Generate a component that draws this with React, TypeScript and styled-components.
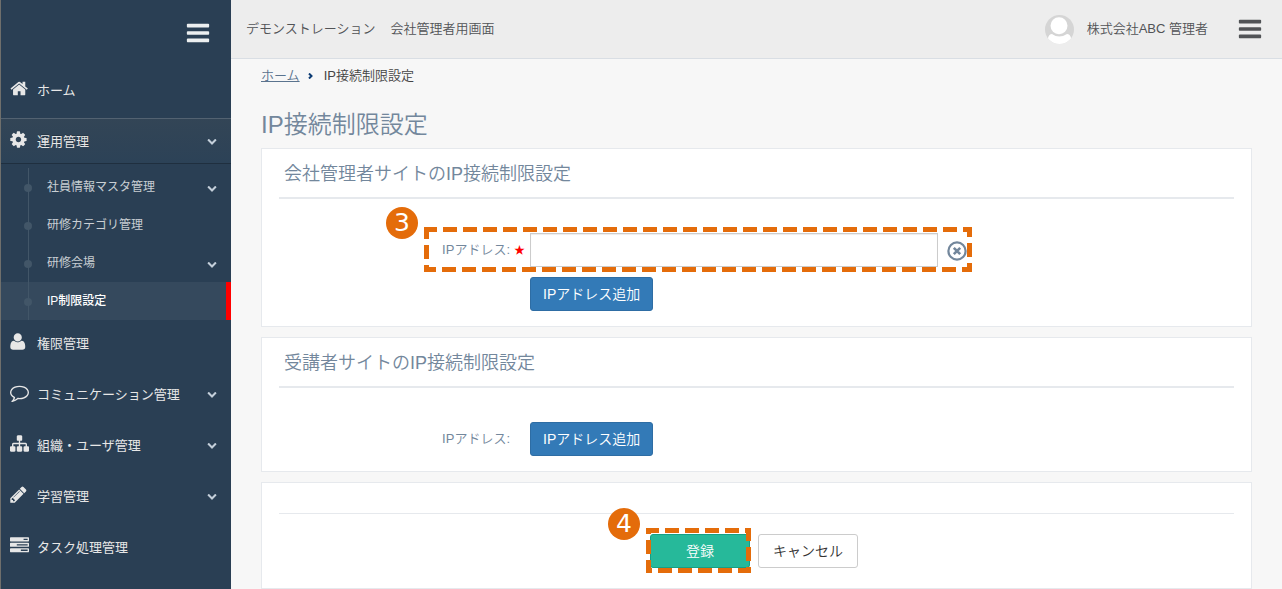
import React from "react";
import styled, { createGlobalStyle, css } from "styled-components";

const GlobalStyle = createGlobalStyle`
  *, *::before, *::after { box-sizing: border-box; }
  body {
    margin: 0;
    background: #f7f7f7;
    color: #73879c;
    font-family: "Liberation Sans", "Noto Sans CJK JP", sans-serif;
    font-size: 13px;
    font-weight: 350;
    line-height: 20px;
  }
  button, input { font-family: inherit; font-weight: inherit; }
  h1, h2, ul, ol { margin: 0; padding: 0; font-weight: 350; list-style: none; }
`;

const Page = styled.div`
  display: flex;
  min-height: 100vh;
`;

const Sidebar = styled.aside`
  flex: 0 0 231px;
  background: #2a3f54;
  border-left: 1px solid #6f6f6c;
`;

const SidebarTop = styled.div`
  display: flex;
  justify-content: flex-end;
  padding: 20px 20px 21px;
`;

const IconButton = styled.button<{ $color: string }>`
  display: flex;
  padding: 0;
  border: 0;
  background: none;
  color: ${(p) => p.$color};
  cursor: pointer;
`;

const MenuLink = styled.a<{ $active?: boolean }>`
  display: flex;
  align-items: center;
  height: 45px;
  margin-bottom: 6px;
  padding: 2px 14px 0 9px;
  color: #e7e7e7;
  font-weight: 400;
  text-decoration: none;
  ${(p) =>
    p.$active &&
    css`
      margin-bottom: 5px;
      background: linear-gradient(#334556, #2c4257);
      box-shadow: rgba(0, 0, 0, 0.25) 0 1px 0, inset rgba(255, 255, 255, 0.16) 0 1px 0;
      text-shadow: rgba(0, 0, 0, 0.25) 0 -1px 0;
    `}
`;

const MenuIcon = styled.span`
  display: flex;
  width: 27px;
  padding-bottom: 5px;
`;

const Grow = styled.span`
  flex: 1;
`;

const Arrow = styled.span<{ $nested?: boolean }>`
  display: flex;
  padding: ${(p) => (p.$nested ? "2px 0 0" : "0 0 2px")};
  color: #c4cfda;
`;

const SubMenu = styled.ul`
  position: relative;
  &::before {
    content: "";
    position: absolute;
    top: 0;
    bottom: 0;
    left: 27px;
    width: 1px;
    background: #425668;
  }
`;

const SubLink = styled.a<{ $active?: boolean }>`
  display: flex;
  align-items: center;
  gap: 15px;
  height: 38px;
  padding: 0 14px 0 23px;
  font-size: 12px;
  font-weight: ${(p) => (p.$active ? 500 : 400)};
  text-decoration: none;
  color: ${(p) => (p.$active ? "#fff" : "rgba(255, 255, 255, 0.75)")};
  ${(p) =>
    p.$active &&
    css`
      background: #35495d;
      border-right: 5px solid #f00;
    `}
`;

const Dot = styled.span`
  width: 8px;
  height: 8px;
  margin-top: 2px;
  border-radius: 50%;
  background: #425668;
`;

const Main = styled.div`
  flex: 1;
  min-width: 0;
`;

const TopBar = styled.header`
  display: flex;
  align-items: center;
  height: 59px;
  padding: 0 19px 0 15px;
  background: #ededed;
  border-bottom: 1px solid #d9dee4;
  color: #515356;
`;

const SiteName = styled.span`
  margin-right: 15px;
`;

const UserName = styled.span`
  margin: 0 29px 0 13px;
`;

const Content = styled.main`
  padding: 7px 30px 0;
`;

const Breadcrumb = styled.ol`
  display: flex;
  align-items: center;
  color: #444;
  a { color: #5a738e; text-underline-offset: 1px; }
  svg { margin: 0 11px 0 8px; }
`;

const PageTitle = styled.h1`
  margin: 21px 0 5px;
  font-size: 24px;
  line-height: 36px;
`;

const Panel = styled.section`
  margin-bottom: 10px;
  padding: 0 17px 15px;
  background: #fff;
  border: 1px solid #e6e9ed;
`;

const PanelTitle = styled.h2`
  margin-bottom: 34px;
  padding: 11px 5px 9px;
  border-bottom: 2px solid #e6e9ed;
  font-size: 18px;
  line-height: 28px;
`;

const FormGrid = styled.div`
  display: grid;
  grid-template-columns: 251fr 408fr 296fr;
  row-gap: 10px;
  position: relative;
`;

const FieldLabel = styled.label<{ $required?: boolean }>`
  display: flex;
  align-items: center;
  justify-content: flex-end;
  gap: 4px;
  padding-right: ${(p) => (p.$required ? 5 : 20)}px;
`;

const Star = styled.span`
  width: 11px;
  color: #f00;
  font-size: 11px;
`;

const TextInput = styled.input`
  width: 100%;
  height: 34px;
  padding: 6px 12px;
  border: 1px solid #ccc;
  box-shadow: inset 0 1px 1px rgba(0, 0, 0, 0.075);
  background: #fff;
  color: #555;
  font-size: 14px;
`;

const RemoveCell = styled.div`
  display: flex;
  align-items: center;
  padding: 1px 0 0 9px;
`;

const ButtonCell = styled.div`
  grid-column: 2;
  display: flex;
`;

type Tone = "primary" | "success" | "plain";

const tones = {
  primary: css`background: #337ab7; border-color: #2e6da4; color: #fff;`,
  success: css`background: #26b99a; border-color: #169f85; color: #fff;`,
  plain: css`background: #fff; border-color: #ccc; color: #333;`,
};

const Button = styled.button<{ $tone: Tone; $wide?: boolean }>`
  height: 34px;
  width: ${(p) => (p.$wide ? "100px" : "auto")};
  padding: 0 12px 2px;
  border: 1px solid;
  border-radius: 3px;
  font-size: 14px;
  cursor: pointer;
  ${(p) => tones[p.$tone]}
`;

const ActionPanel = styled(Panel)`
  margin-bottom: 0;
  padding: 30px 17px 20px;
`;

const Actions = styled.div`
  display: flex;
  justify-content: center;
  gap: 8px;
  padding: 20px 5px 0 0;
  border-top: 1px solid #e6e9ed;
`;

const Marked = styled.div`
  position: relative;
  display: flex;
`;

const FieldMark = styled.div`
  position: absolute;
  top: -6px;
  right: calc(100% * 296 / 955 - 34px);
  left: calc(100% * 251 / 955 - 106px);
  height: 45px;
  pointer-events: none;
`;

const ButtonMark = styled.div`
  position: absolute;
  inset: -6px -1px -5px -4px;
  pointer-events: none;
`;

const Badge = styled.span`
  position: absolute;
  top: -20px;
  left: -38px;
  width: 32px;
  height: 32px;
  border-radius: 50%;
  background: #e46c0a;
  color: #fff;
  font: 400 25px/32px "DejaVu Sans", sans-serif;
  text-align: center;
`;

const FrameSvg = styled.svg`
  display: block;
  width: 100%;
  height: 100%;
  overflow: visible;
`;

const FrameRect = styled.rect`
  width: calc(100% - 5px);
  height: calc(100% - 5px);
`;

const DashedFrame = ({ step }: { step: number }) => (
  <>
    <FrameSvg aria-hidden="true">
      <FrameRect x="2.5" y="2.5" fill="none" stroke="#e46c0a" strokeWidth="5" strokeDasharray="14 6" strokeDashoffset="3.5" />
      <rect width="5" height="5" fill="#e46c0a" />
    </FrameSvg>
    <Badge>{step}</Badge>
  </>
);

const paths = {
  home: "M1472 992v480q0 26-19 45t-45 19h-384v-384h-256v384h-384q-26 0-45-19t-19-45v-480q0-1 .5-3t.5-3l575-474 575 474q1 2 1 6zm223-69l-62 74q-8 9-21 11h-3q-13 0-21-7l-692-577-692 577q-12 8-24 7-13-2-21-11l-62-74q-8-10-7-23.5t11-21.5l719-599q32-26 76-26t76 26l244 204v-195q0-14 9-23t23-9h192q14 0 23 9t9 23v408l219 182q10 8 11 21.5t-7 23.5z",
  cog: "M1152 896q0-106-75-181t-181-75-181 75-75 181 75 181 181 75 181-75 75-181zm512-109v222q0 12-8 23t-20 13l-185 28q-19 54-39 91 35 50 107 138 10 12 10 25t-9 23q-27 37-99 108t-94 71q-12 0-26-9l-138-108q-44 23-91 38-16 136-29 186-7 28-36 28h-222q-14 0-24.5-8.5t-11.5-21.5l-28-184q-49-16-90-37l-141 107q-10 9-25 9-14 0-25-11-126-114-165-168-7-10-7-23 0-12 8-23 15-21 51-66.5t54-70.5q-27-50-41-99l-183-27q-13-2-21-12.5t-8-23.5v-222q0-12 8-23t19-13l186-28q14-46 39-92-40-57-107-138-10-12-10-24 0-10 9-23 26-36 98.5-107.500t94.500-71.500q13 0 26 10l138 107q44-23 91-38 16-136 29-186 7-28 36-28h222q14 0 24.500 8.500t11.500 21.500l28 184q49 16 90 37l142-107q9-9 24-9 13 0 25 10 129 119 165 170 7 8 7 22 0 12-8 23-15 21-51 66.500t-54 70.500q26 50 41 98l183 28q13 2 21 12.500t8 23.500z",
  user: "M1600 1405q0 120-73 189.5t-194 69.5h-874q-121 0-194-69.5t-73-189.5q0-53 3.5-103.5t14-109 26.5-108.5 43-97.5 62-81 85.5-53.5 111.5-20q9 0 42 21.5t74.5 48 108 48 133.5 21.5 133.5-21.5 108-48 74.5-48 42-21.5q61 0 111.5 20t85.5 53.5 62 81 43 97.5 26.5 108.5 14 109 3.5 103.5zm-320-893q0 159-112.5 271.5t-271.5 112.5-271.5-112.5-112.5-271.5 112.5-271.5 271.5-112.5 271.5 112.5 112.5 271.5z",
  comment: "M896 384q-204 0-381.500 69.500t-282 187.500-104.500 255q0 112 71.500 213.500t201.500 175.500l87 50-27 96q-24 91-70 172 152-63 275-171l43-38 57 6q69 8 130 8 204 0 381.500-69.500t282-187.500 104.500-255-104.500-255-282-187.500-381.500-69.500zm896 512q0 174-120 321.500t-326 233-450 85.500q-70 0-145-8-198 175-460 242-49 14-114 22h-5q-15 0-27-10.500t-16-27.500v-1q-3-4-.5-12t2-10 4.500-9.500l6-9 7-8.500 8-9q7-8 31-34.500t34.500-38 31-39.500 32.500-51 27-59 26-76q-157-89-247.500-220t-90.500-281q0-174 120-321.500t326-233 450-85.500 450 85.500 326 233 120 321.500z",
  sitemap: "M1792 1248v320q0 40-28 68t-68 28h-320q-40 0-68-28t-28-68v-320q0-40 28-68t68-28h96v-192h-512v192h96q40 0 68 28t28 68v320q0 40-28 68t-68 28h-320q-40 0-68-28t-28-68v-320q0-40 28-68t68-28h96v-192h-512v192h96q40 0 68 28t28 68v320q0 40-28 68t-68 28h-320q-40 0-68-28t-28-68v-320q0-40 28-68t68-28h96v-192q0-52 38-90t90-38h512v-192h-96q-40 0-68-28t-28-68v-320q0-40 28-68t68-28h320q40 0 68 28t28 68v320q0 40-28 68t-68 28h-96v192h512q52 0 90 38t38 90v192h96q40 0 68 28t28 68z",
  pencil: "M491 1536l91-91-235-235-91 91v107h128v128h107zm523-928q0-22-22-22-10 0-17 7l-542 542q-7 7-7 17 0 22 22 22 10 0 17-7l542-542q7-7 7-17zm-54-192l416 416-832 832h-416v-416zm683 96q0 53-37 90l-166 166-416-416 166-165q36-38 90-38 53 0 91 38l235 234q37 39 37 91z",
  tasks: "M1024 1408h640v-128h-640v128zm-384-512h1024v-128h-1024v128zm640-512h384v-128h-384v128zm512 832v256q0 26-19 45t-45 19h-1664q-26 0-45-19t-19-45v-256q0-26 19-45t45-19h1664q26 0 45 19t19 45zm0-512v256q0 26-19 45t-45 19h-1664q-26 0-45-19t-19-45v-256q0-26 19-45t45-19h1664q26 0 45 19t19 45zm0-512v256q0 26-19 45t-45 19h-1664q-26 0-45-19t-19-45v-256q0-26 19-45t45-19h1664q26 0 45 19t19 45z",
  chevron: "M1683 808l-742 741q-19 19-45 19t-45-19l-742-741q-19-19-19-45.500t19-45.500l166-165q19-19 45-19t45 19l531 531 531-531q19-19 45-19t45 19l166 165q19 19 19 45.500t-19 45.500z",
  bars: "M1664 1344v128q0 26-19 45t-45 19h-1408q-26 0-45-19t-19-45v-128q0-26 19-45t45-19h1408q26 0 45 19t19 45zm0-512v128q0 26-19 45t-45 19h-1408q-26 0-45-19t-19-45v-128q0-26 19-45t45-19h1408q26 0 45 19t19 45zm0-512v128q0 26-19 45t-45 19h-1408q-26 0-45-19t-19-45v-128q0-26 19-45t45-19h1408q26 0 45 19t19 45z",
};

type IconName = keyof typeof paths;

// Left bearing of each glyph, so that menu icons share one left edge.
const bearings: Partial<Record<IconName, number>> = { home: 32, cog: 100, user: 164, pencil: 100 };

const Icon = ({ name, size }: { name: IconName; size: number }) => (
  <svg
    width={size}
    height={size}
    viewBox={`${bearings[name] ?? 0} 0 1792 1792`}
    fill="currentColor"
    aria-hidden="true"
  >
    <path d={paths[name]} />
  </svg>
);

const Avatar = () => (
  <svg width="29" height="29" viewBox="0 0 29 29" aria-hidden="true">
    <clipPath id="avatar-clip"><circle cx="14.5" cy="14.5" r="14.5" /></clipPath>
    <g clipPath="url(#avatar-clip)">
      <rect width="29" height="29" fill="#d5d5d5" />
      <path d="M3 29V23q1-4 4-4 7 5 15 0 3 0 4 4v6z" fill="#fff" />
      <circle cx="14" cy="10.8" r="10" fill="#d5d5d5" />
      <circle cx="14" cy="10.8" r="8.5" fill="#fff" />
    </g>
  </svg>
);

interface SubItem { label: string; arrow?: boolean; active?: boolean }
interface Item { label: string; icon: IconName; arrow?: boolean; active?: boolean; children?: SubItem[] }

const menu: Item[] = [
  { label: "ホーム", icon: "home" },
  {
    label: "運用管理",
    icon: "cog",
    arrow: true,
    active: true,
    children: [
      { label: "社員情報マスタ管理", arrow: true },
      { label: "研修カテゴリ管理" },
      { label: "研修会場", arrow: true },
      { label: "IP制限設定", active: true },
    ],
  },
  { label: "権限管理", icon: "user" },
  { label: "コミュニケーション管理", icon: "comment", arrow: true },
  { label: "組織・ユーザ管理", icon: "sitemap", arrow: true },
  { label: "学習管理", icon: "pencil", arrow: true },
  { label: "タスク処理管理", icon: "tasks" },
];

export default function App() {
  return (
    <Page lang="ja">
      <GlobalStyle />
      <Sidebar>
        <SidebarTop>
          <IconButton type="button" $color="#eceff0" aria-label="メニュー切替">
            <Icon name="bars" size={26} />
          </IconButton>
        </SidebarTop>
        <nav>
          <ul>
            {menu.map((item) => (
              <li key={item.label}>
                <MenuLink href="#" $active={item.active}>
                  <MenuIcon><Icon name={item.icon} size={19} /></MenuIcon>
                  <span>{item.label}</span>
                  <Grow />
                  {item.arrow && <Arrow><Icon name="chevron" size={10} /></Arrow>}
                </MenuLink>
                {item.children && (
                  <SubMenu>
                    {item.children.map((sub) => (
                      <li key={sub.label}>
                        <SubLink href="#" $active={sub.active}>
                          <Dot />
                          <span>{sub.label}</span>
                          <Grow />
                          {sub.arrow && <Arrow $nested><Icon name="chevron" size={10} /></Arrow>}
                        </SubLink>
                      </li>
                    ))}
                  </SubMenu>
                )}
              </li>
            ))}
          </ul>
        </nav>
      </Sidebar>
      <Main>
        <TopBar>
          <SiteName>デモンストレーション</SiteName>
          <span>会社管理者用画面</span>
          <Grow />
          <Avatar />
          <UserName>株式会社ABC 管理者</UserName>
          <IconButton type="button" $color="#515356" aria-label="ユーザーメニュー">
            <Icon name="bars" size={26} />
          </IconButton>
        </TopBar>
        <Content>
          <Breadcrumb>
            <li><a href="#">ホーム</a></li>
            <svg width="5" height="6" viewBox="0 0 5 6" aria-hidden="true">
              <path d="M1 0.5L3.5 3 1 5.5" fill="none" stroke="#0b3a73" strokeWidth="2" />
            </svg>
            <li>IP接続制限設定</li>
          </Breadcrumb>
          <PageTitle>IP接続制限設定</PageTitle>
          <Panel>
            <PanelTitle>会社管理者サイトのIP接続制限設定</PanelTitle>
            <FormGrid>
              <FieldLabel htmlFor="admin-ip" $required>
                IPアドレス: <Star>★</Star>
              </FieldLabel>
              <TextInput id="admin-ip" type="text" />
              <RemoveCell>
                <IconButton type="button" $color="#73879c" aria-label="削除">
                  <svg width="20" height="20" viewBox="0 0 20 20" fill="none" stroke="currentColor" aria-hidden="true">
                    <circle cx="10" cy="10" r="8.6" strokeWidth="2.2" />
                    <path d="M6.8 6.8l6.4 6.4M13.2 6.8l-6.4 6.4" strokeWidth="2.6" />
                  </svg>
                </IconButton>
              </RemoveCell>
              <ButtonCell>
                <Button type="button" $tone="primary">IPアドレス追加</Button>
              </ButtonCell>
              <FieldMark><DashedFrame step={3} /></FieldMark>
            </FormGrid>
          </Panel>
          <Panel>
            <PanelTitle>受講者サイトのIP接続制限設定</PanelTitle>
            <FormGrid>
              <FieldLabel htmlFor="student-ip-add">IPアドレス:</FieldLabel>
              <ButtonCell>
                <Button id="student-ip-add" type="button" $tone="primary">IPアドレス追加</Button>
              </ButtonCell>
            </FormGrid>
          </Panel>
          <ActionPanel>
            <Actions>
              <Marked>
                <Button type="submit" $tone="success" $wide>登録</Button>
                <ButtonMark><DashedFrame step={4} /></ButtonMark>
              </Marked>
              <Button type="button" $tone="plain" $wide>キャンセル</Button>
            </Actions>
          </ActionPanel>
        </Content>
      </Main>
    </Page>
  );
}
